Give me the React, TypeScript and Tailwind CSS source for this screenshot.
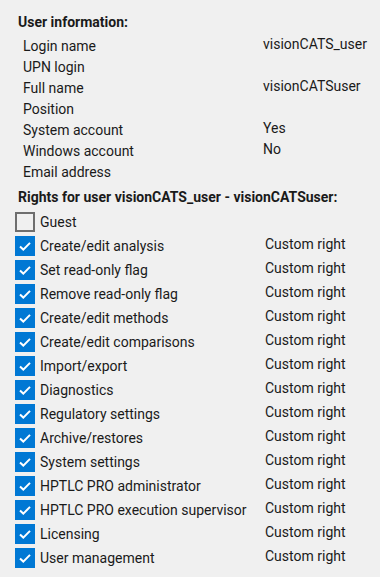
import React from "react";

const info: [string, string][] = [
  ["Login name", "visionCATS_user"],
  ["UPN login", ""],
  ["Full name", "visionCATSuser"],
  ["Position", ""],
  ["System account", "Yes"],
  ["Windows account", "No"],
  ["Email address", ""],
];

const rights: [string, boolean, string][] = [
  ["Guest", false, ""],
  ["Create/edit analysis", true, "Custom right"],
  ["Set read-only flag", true, "Custom right"],
  ["Remove read-only flag", true, "Custom right"],
  ["Create/edit methods", true, "Custom right"],
  ["Create/edit comparisons", true, "Custom right"],
  ["Import/export", true, "Custom right"],
  ["Diagnostics", true, "Custom right"],
  ["Regulatory settings", true, "Custom right"],
  ["Archive/restores", true, "Custom right"],
  ["System settings", true, "Custom right"],
  ["HPTLC PRO administrator", true, "Custom right"],
  ["HPTLC PRO execution supervisor", true, "Custom right"],
  ["Licensing", true, "Custom right"],
  ["User management", true, "Custom right"],
];

function Box({ checked }: { checked: boolean }) {
  if (!checked)
    return <div className="w-[20px] h-[20px] border-2 border-[#6e6e6e] bg-[#f0f0f0] shrink-0" />;
  return (
    <div className="w-[20px] h-[20px] bg-[#0078d4] shrink-0 flex items-center justify-center">
      <svg width="20" height="20" viewBox="0 0 20 20">
        <path d="M5 10.5 L8.3 13.6 L15 6.9" fill="none" stroke="white" strokeWidth="2" />
      </svg>
    </div>
  );
}

export default function App() {
  return (
    <div
      className="w-[380px] h-[577px] bg-[#f0f0f0] text-[#1a1a1a] text-[14px] overflow-hidden"
      style={{ fontFamily: "Roboto, 'Liberation Sans', sans-serif" }}
    >
      <div className="pt-[13px] pl-[18px] h-[31px] leading-[18px] font-bold">User information:</div>
      <div className="mt-[4px] flex flex-col">
        {info.map(([k, v]) => (
          <div key={k} className="h-[21px] flex items-center">
            <div className="pl-[23px] w-[263px] leading-[18px]">{k}</div>
            <div className="leading-[18px] pb-[4px]">{v}</div>
          </div>
        ))}
      </div>
      <div className="mt-[6px] pl-[18px] h-[18px] leading-[18px] font-bold">
        Rights for user visionCATS_user - visionCATSuser:
      </div>
      <div className="mt-[4px] flex flex-col">
        {rights.map(([k, c, v]) => (
          <div key={k} className="h-[24px] flex items-center">
            <div className="pl-[15px] w-[265px] flex items-center gap-[5px]">
              <Box checked={c} />
              <span className="leading-[18px]">{k}</span>
            </div>
            <div className="leading-[18px] pb-[4px]">{v}</div>
          </div>
        ))}
      </div>
    </div>
  );
}
